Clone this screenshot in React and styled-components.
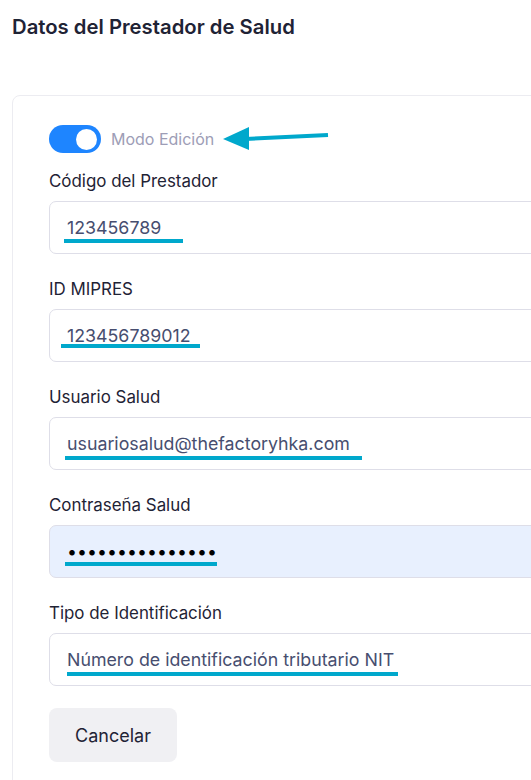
import React from 'react';
import styled, { createGlobalStyle } from 'styled-components';

const Global = createGlobalStyle`
  html, body {
    margin: 0;
    padding: 0;
    background: #ffffff;
    overflow: hidden;
    font-family: Inter, "Noto Sans", sans-serif;
  }
`;

const Page = styled.div`
  width: 720px;
  padding: 14px 0 0 12px;
`;

const Title = styled.h2`
  margin: 0;
  font-size: 20.3px;
  line-height: 26px;
  font-weight: 600;
  color: #1f2335;
`;

const Card = styled.div`
  margin-top: 55px;
  border: 1px solid #ececf1;
  border-radius: 8px;
  padding: 29px 36px 40px 36px;
  display: flex;
  flex-direction: column;
`;

const ToggleRow = styled.div`
  display: flex;
  align-items: center;
  gap: 10px;
  height: 28px;
  margin-bottom: 18px;
`;

const Switch = styled.div`
  width: 52px;
  height: 28px;
  border-radius: 14px;
  background: #1e85ff;
  display: flex;
  align-items: center;
  justify-content: flex-end;
  padding: 0 4px;
  box-sizing: border-box;
`;

const Knob = styled.div`
  width: 21px;
  height: 21px;
  border-radius: 50%;
  background: #ffffff;
`;

const ToggleText = styled.span`
  font-size: 16px;
  color: #9d9db6;
`;

const Field = styled.div`
  display: flex;
  flex-direction: column;
  margin-bottom: 25px;
`;

const Label = styled.label`
  font-size: 16.9px;
  line-height: 20px;
  color: #1f2335;
  margin-bottom: 10px;
`;

const InputWrap = styled.div`
  position: relative;
`;

const Input = styled.input`
  width: 100%;
  height: 53px;
  box-sizing: border-box;
  border: 1px solid #dedee8;
  border-radius: 7px;
  padding: 0 17px;
  font-family: Inter, "Noto Sans", sans-serif;
  font-size: 17.8px;
  color: ${p => (p.$filled ? '#000000' : '#474e6f')};
  background: ${p => (p.$filled ? '#e8f0fe' : '#ffffff')};
  outline: none;
  letter-spacing: 0;
`;

const Mark = styled.span`
  position: absolute;
  left: ${p => p.$left}px;
  top: ${p => p.$top}px;
  width: ${p => p.$width}px;
  height: 4px;
  background: #00a8cc;
  pointer-events: none;
`;

const Button = styled.button`
  align-self: flex-start;
  width: 128px;
  height: 54px;
  margin-top: -3px;
  border: none;
  border-radius: 8px;
  background: #f0f0f3;
  font-family: Inter, "Noto Sans", sans-serif;
  font-size: 18px;
  color: #1f2335;
`;

const ArrowSvg = styled.svg`
  position: relative;
  left: -1px;
  top: -1px;
`;

const fields = [
  { label: 'Código del Prestador', value: '123456789', mark: { left: 15, top: 38, width: 119 } },
  { label: 'ID MIPRES', value: '123456789012', mark: { left: 12, top: 35, width: 139 } },
  { label: 'Usuario Salud', value: 'usuariosalud@thefactoryhka.com', mark: { left: 16, top: 39, width: 297 } },
  { label: 'Contraseña Salud', value: '123456789012345', password: true, mark: { left: 16, top: 37, width: 152 } },
  { label: 'Tipo de Identificación', value: 'Número de identificación tributario NIT', mark: { left: 18, top: 39, width: 331 } },
];

export default function App() {
  return (
    <Page>
      <Global />
      <Title>Datos del Prestador de Salud</Title>
      <Card>
        <ToggleRow>
          <Switch>
            <Knob />
          </Switch>
          <ToggleText>Modo Edición</ToggleText>
          <ArrowSvg width="110" height="28" viewBox="0 0 110 28">
            <polygon points="0,15 26,3 26,26" fill="#00a8cc" />
            <line x1="22" y1="15" x2="105" y2="11" stroke="#00a8cc" strokeWidth="4" />
          </ArrowSvg>
        </ToggleRow>
        {fields.map(f => (
          <Field key={f.label}>
            <Label>{f.label}</Label>
            <InputWrap>
              <Input
                type={f.password ? 'password' : 'text'}
                value={f.value}
                readOnly
                $filled={f.password}
              />
              <Mark $left={f.mark.left} $top={f.mark.top} $width={f.mark.width} />
            </InputWrap>
          </Field>
        ))}
        <Button>Cancelar</Button>
      </Card>
    </Page>
  );
}
